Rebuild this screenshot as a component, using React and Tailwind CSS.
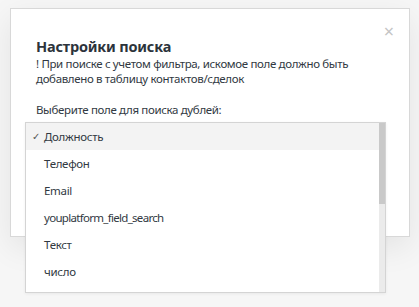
import React from 'react'

const items = ['Должность', 'Телефон', 'Email', 'youplatform_field_search', 'Текст', 'число']

export default function App() {
  return (
    <div
      className="w-[419px] h-[307px] overflow-hidden bg-[#f6f6f6] pt-[8px] pl-[10px]"
      style={{ fontFamily: '"Noto Sans", "Open Sans", sans-serif' }}
    >
      <div className="relative w-[400px] h-[229px] bg-white border border-[#d8d8d8] shadow-[0_10px_30px_rgba(0,0,0,0.08)] pl-[25px] pt-[28px] text-[#313942]">
        <button className="absolute right-[15px] top-[13px] text-[#c4c4c4] text-[18px] leading-none">×</button>
        <h2 className="text-[14.5px] font-bold leading-[18px] tracking-[-0.2px] text-[#2c333b]">Настройки поиска</h2>
        <p className="text-[11.5px] leading-[15px] mt-[1px] tracking-[-0.35px]">
          ! При поиске с учетом фильтра, искомое поле должно быть
          <br />
          добавлено в таблицу контактов/сделок
        </p>
        <p className="text-[11.5px] leading-[15px] mt-[16px] tracking-[-0.35px]">Выберите поле для поиска дублей:</p>

        <div className="absolute left-[14px] top-[113px] w-[361px] h-[171px] bg-white border border-[#d4d4d4] shadow-[0_1px_3px_rgba(0,0,0,0.06)] flex overflow-hidden">
          <ul className="flex-1 flex flex-col">
            {items.map((it, i) => (
              <li
                key={it}
                className={`relative shrink-0 h-[27px] flex items-center pl-[18px] text-[11.5px] ${
                  i === 3 ? 'tracking-[-0.7px]' : 'tracking-[-0.3px]'
                } ${i === 0 ? 'bg-[#f3f3f3]' : ''}`}
              >
                {i === 0 && <span className="absolute left-[6px] text-[10px] text-[#555]">✓</span>}
                {it}
              </li>
            ))}
          </ul>
          <div className="w-[6px] bg-[#ebebeb] flex flex-col">
            <div className="h-[81px] bg-[#c9c9c9]" />
          </div>
        </div>
      </div>
    </div>
  )
}
